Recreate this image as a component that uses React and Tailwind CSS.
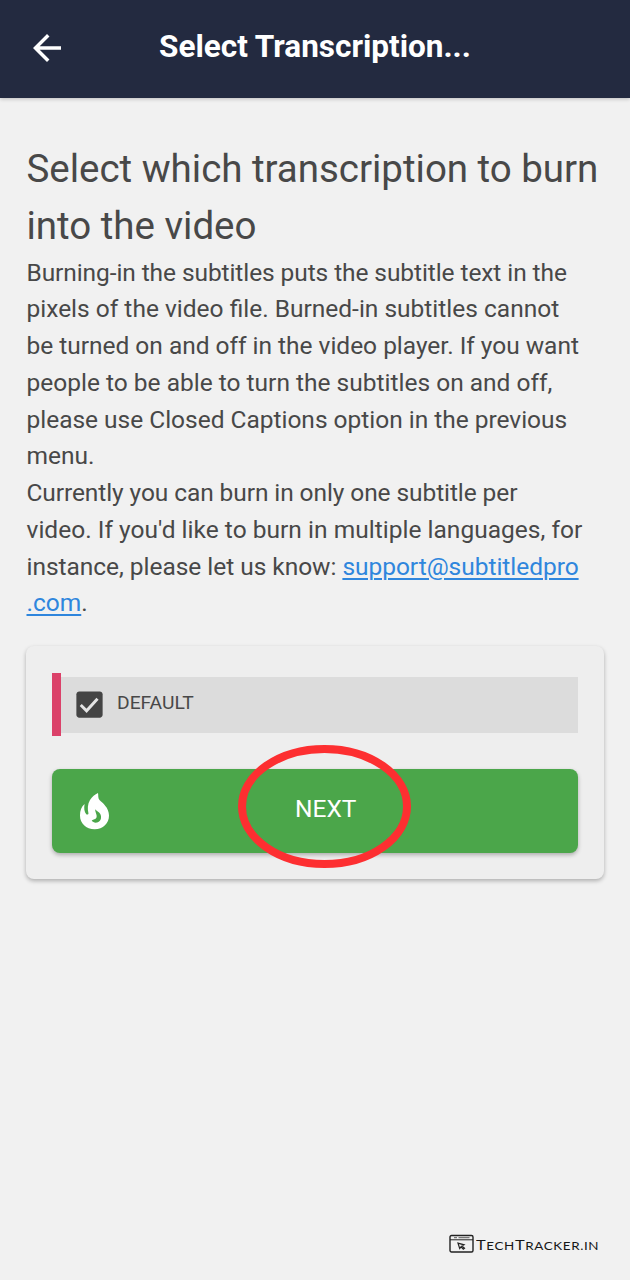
import React from "react";

function Line({ children, className = "" }) {
  return <span className={`block whitespace-nowrap ${className}`}>{children}</span>;
}

function Header() {
  return (
    <header className="flex h-[98px] shrink-0 items-center bg-[#232a40] pl-[26px] shadow-[0_1px_4px_rgba(0,0,0,0.22)]">
      <svg className="mt-[-2px] h-[42px] w-[42px]" viewBox="0 0 24 24" fill="#fff">
        <path d="M20 11H7.83l5.59-5.59L12 4l-8 8 8 8 1.41-1.41L7.83 13H20v-2z" />
      </svg>
      <h1 className="ml-[91px] mt-[-4px] whitespace-nowrap text-[31.5px] font-bold leading-[42px] text-white">
        Select Transcription...
      </h1>
    </header>
  );
}

function Card() {
  return (
    <section className="ml-[26px] mr-[26px] mt-[24px] h-[233px] rounded-[8px] bg-[#eeeeee] px-[26px] pt-[27px] shadow-[0_2px_4px_rgba(0,0,0,0.28)]">
      <div className="flex h-[63px] items-center">
        <div className="h-[63px] w-[9px] bg-[#db4169]" />
        <div className="flex h-[56px] flex-1 items-center bg-[#dcdcdc] pl-[11px]">
          <svg className="h-[35px] w-[35px]" viewBox="0 0 24 24" fill="#444">
            <path d="M19 3H5c-1.110 0-2 .9-2 2v14c0 1.100.89 2 2 2h14c1.110 0 2-.9 2-2V5c0-1.100-.89-2-2-2z" />
            <path d="M6 12.300l4 4 7.500-8.200" fill="none" stroke="#e4e4e4" strokeWidth="2" />
          </svg>
          <span className="ml-[10px] mt-[-4px] text-[19.25px] leading-6 text-[#484848]">DEFAULT</span>
        </div>
      </div>
      <button className="relative mt-[33px] flex h-[84px] w-full items-center rounded-[8px] bg-[#4ba64a] pl-[21px] shadow-[0_2px_4px_rgba(0,0,0,0.28)]">
        <svg className="h-[42px] w-[42px]" viewBox="73 790 42 42" fill="#fff">
          <path
            fillRule="evenodd"
            d="M98 793C98.500 795.500 97.800 798 99.500 800C102.500 803 109 807.500 109 815.500C109 823.500 103 829.200 94.700 829.200C86 829.200 80 823.500 80 815.500C80 810.500 81.300 806.800 84.600 804C83.800 808 84.200 811.800 86.300 814.200C87 815 88.800 814.500 88.400 813C87.500 809 87.400 804.500 90 800C92 796.500 95 794.500 98 793ZM95.300 809.300C94.800 812 97.500 815 96.500 817.500C95.500 819.700 93.500 819.300 91.700 820.500C93 822.500 95.500 823.200 98 822.200C101.200 820.800 101.800 817 100.300 814C99 811.800 96.500 811.500 95.300 809.300Z"
          />
        </svg>
        <span className="ml-[180px] mt-[-5px] text-[24.5px] leading-8 text-white">NEXT</span>
        <svg className="pointer-events-none absolute left-[185px] top-[-25px] h-[124px] w-[175px]" viewBox="0 0 175 124" fill="none">
          <ellipse cx="87.500" cy="62.500" rx="82.500" ry="57.500" stroke="#fd2f31" strokeWidth="8" />
        </svg>
      </button>
    </section>
  );
}

function Watermark() {
  return (
    <footer className="mt-auto flex items-center pb-[24px] pl-[449px]">
      <svg className="mt-[-3px] h-[20px] w-[26px]" viewBox="0 0 26 20" fill="none" stroke="#222">
        <rect x="1" y="1.500" width="23" height="16.500" rx="1.500" strokeWidth="1.400" />
        <path d="M1 5.800h23" strokeWidth="1" />
        <path d="M5 3.600h3M9.500 3.600h11" stroke="#777" strokeWidth="1.200" />
        <path d="M9 9.200l6 1.600-2 1.200 2.500 2.200-1.200 1-2.300-2.300-1.300 1.600z" strokeWidth="1.200" />
      </svg>
      <span className="ml-[1px] origin-left scale-x-[1.22] whitespace-nowrap font-['Lato'] text-[13.5px] leading-5 tracking-[0.5px] text-[#181818]">
        T<span className="text-[11px]">ECH</span>T<span className="text-[11px]">RACKER.IN</span>
      </span>
    </footer>
  );
}

export default function App() {
  return (
    <div className="flex h-[1280px] w-[630px] flex-col overflow-hidden bg-[#f1f1f1] font-['Roboto',sans-serif] text-[#484848]">
      <Header />
      <main className="pt-[41.5px]">
        <h2 className="pl-[26.5px] text-[38.5px] leading-[57.75px]">
          <Line className="tracking-[-0.02px]">Select which transcription to burn</Line>
          <Line className="tracking-[-0.02px]">into the video</Line>
        </h2>
        <p className="mt-[-0.5px] pl-[26.5px] text-[24.5px] leading-[36.75px]">
          <Line className="tracking-[-0.09px]">Burning-in the subtitles puts the subtitle text in the</Line>
          <Line>pixels of the video file. Burned-in subtitles cannot</Line>
          <Line className="tracking-[-0.02px]">be turned on and off in the video player. If you want</Line>
          <Line>people to be able to turn the subtitles on and off,</Line>
          <Line className="tracking-[-0.02px]">please use Closed Captions option in the previous</Line>
          <Line>menu.</Line>
          <Line className="tracking-[-0.09px]">Currently you can burn in only one subtitle per</Line>
          <Line className="tracking-[0.02px]">video. If you'd like to burn in multiple languages, for</Line>
          <Line className="tracking-[-0.04px]">
            instance, please let us know: <a className="text-[#2f86dd] underline decoration-[1.500px] underline-offset-[3px]">support@subtitledpro</a>
          </Line>
          <Line>
            <a className="text-[#2f86dd] underline decoration-[1.500px] underline-offset-[3px]">.com</a>.
          </Line>
        </p>
        <Card />
      </main>
      <Watermark />
    </div>
  );
}
